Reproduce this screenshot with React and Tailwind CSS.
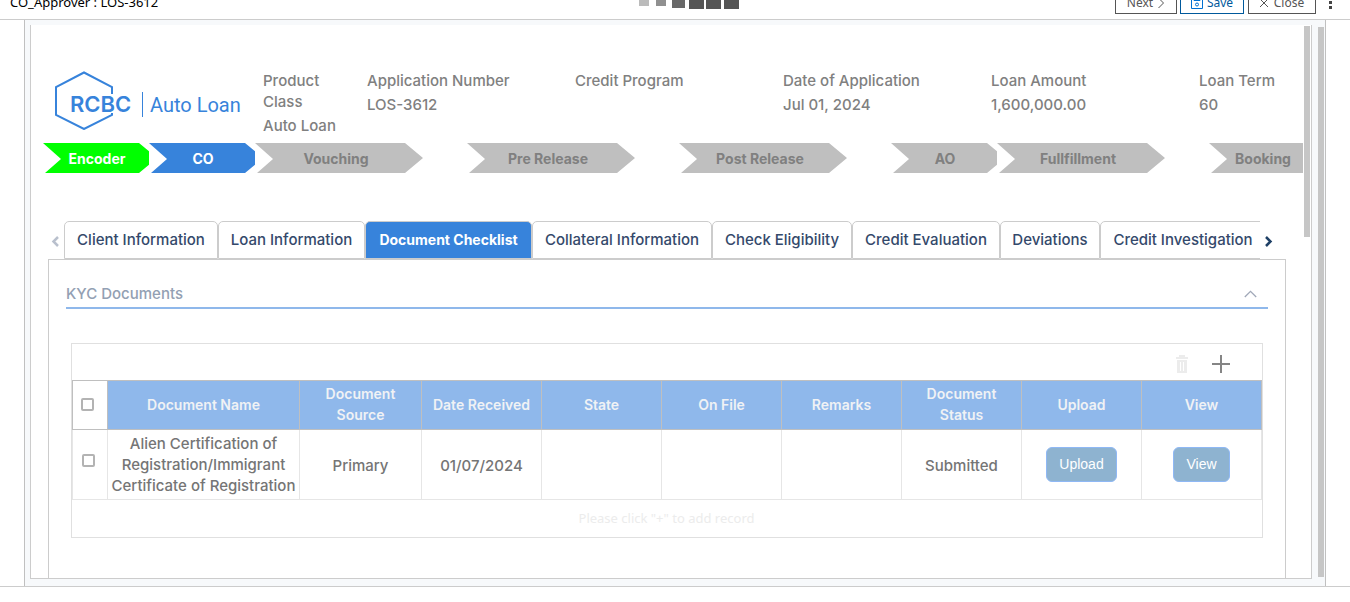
const info = [
  { label: "Product Class", value: "Auto Loan", width: "w-[104px]" },
  { label: "Application Number", value: "LOS-3612", width: "w-[208px]" },
  { label: "Credit Program", value: "", width: "w-[208px]" },
  { label: "Date of Application", value: "Jul 01, 2024", width: "w-[208px]" },
  { label: "Loan Amount", value: "1,600,000.00", width: "w-[208px]" },
  { label: "Loan Term", value: "60", width: "w-[104px]" },
];

const steps = [
  { label: "Encoder", cell: "w-[106px]", tone: "bg-[#00ff00] text-white w-[114px]" },
  { label: "CO", cell: "w-[106px]", tone: "bg-[#3783db] text-white w-[114px]" },
  { label: "Vouching", cell: "w-[212px]", tone: "bg-[#bfbfbf] text-[#808080] w-[168px]" },
  { label: "Pre Release", cell: "w-[212px]", tone: "bg-[#bfbfbf] text-[#808080] w-[168px]" },
  { label: "Post Release", cell: "w-[212px]", tone: "bg-[#bfbfbf] text-[#808080] w-[168px]" },
  { label: "AO", cell: "w-[106px]", tone: "bg-[#bfbfbf] text-[#808080] w-[114px]" },
  { label: "Fullfillment", cell: "w-[212px]", tone: "bg-[#bfbfbf] text-[#808080] w-[168px]" },
  { label: "Booking", cell: "w-[106px]", tone: "bg-[#bfbfbf] text-[#808080] w-[114px]" },
];

const tabs = [
  { label: "Client Information", width: "w-[154px]" },
  { label: "Loan Information", width: "w-[147px]" },
  { label: "Document Checklist", width: "w-[167px]", active: true },
  { label: "Collateral Information", width: "w-[180px]" },
  { label: "Check Eligibility", width: "w-[140px]" },
  { label: "Credit Evaluation", width: "w-[148px]" },
  { label: "Deviations", width: "w-[100px]" },
  { label: "Credit Investigation", width: "w-[166px]" },
];

const columns = ["Document Name", "Document Source", "Date Received", "State", "On File", "Remarks", "Document Status", "Upload", "View"];

function Logo() {
  return (
    <svg width="186" height="60" viewBox="0 0 186 60" role="img" aria-label="RCBC Auto Loan" fill="none">
      <path d="M57 24V17L29 2.500L1 17V45L29 59L57 45V43" stroke="#3783db" strokeWidth="2" />
      <text x="15" y="42" fill="#3783db" className="font-['Inter'] text-[22px] font-semibold">RCBC</text>
      <path d="M87.500 22V47" stroke="#3783db" strokeWidth="1" />
      <text x="95" y="42" fill="#3783db" className="font-['Roboto'] text-[20px]">Auto Loan</text>
    </svg>
  );
}

function TopBar() {
  return (
    <header className="flex h-5 items-end justify-between overflow-hidden border-b border-[#cccccc] px-[10px] font-['Noto_Sans',sans-serif]">
      <h1 className="mb-[7px] flex-1 text-[13px] leading-5 text-black">CO_Approver : LOS-3612</h1>
      <svg width="104" height="20" viewBox="0 0 104 20" className="ml-7 shrink-0" aria-hidden="true">
        <path d="M2 0H12V7H2Z" fill="#bbbbbb" />
        <path d="M19 0H29V7H19Z" fill="#909090" />
        <path d="M35 0H48V9H35Z" fill="#686868" />
        <path d="M52 0H67V10H52ZM69 0H84V10H69ZM87 0H102V10H87Z" fill="#555555" />
      </svg>
      <div className="mb-[5px] flex flex-1 items-end justify-end text-[12px] leading-4">
        <button className="flex h-[23px] w-[62px] items-center justify-center gap-1 border border-[#555] text-[#555]">
          Next
          <svg width="8" height="12" viewBox="0 0 8 12" fill="none" stroke="currentColor"><path d="M1.500 1L6.500 6L1.500 11" /></svg>
        </button>
        <button className="ml-[3px] flex h-[23px] w-16 items-center justify-center gap-1 border border-[#00599c] text-[#00599c]">
          <svg width="12" height="12" viewBox="0 0 12 12" fill="none" stroke="#0070d2"><path d="M.5.5H11.500V11.500H.5ZM3 1V3.500H9V1" /><circle cx="6" cy="7.500" r="1.500" /></svg>
          Save
        </button>
        <button className="ml-1 flex h-[23px] w-[68px] items-center justify-center gap-1.5 border border-[#555] text-[#555]">
          <svg width="8" height="8" viewBox="0 0 8 8" stroke="currentColor"><path d="M0 0L8 8M8 0L0 8" /></svg>
          Close
        </button>
        <button aria-label="More" className="ml-[13px] mr-[7px]">
          <svg width="4" height="18" viewBox="0 0 4 18" fill="#444"><path d="M0 0H3V3H0ZM0 5H3V8H0ZM0 10H3V13H0Z" /></svg>
        </button>
      </div>
    </header>
  );
}

function DocumentTable() {
  return (
    <div className="mx-[5px] mt-[34px] border border-[#e0e0e0]">
      <div className="flex h-9 items-center justify-end gap-6 pr-8 pt-1">
        <button aria-label="Delete" disabled>
          <svg width="12" height="18" viewBox="0 0 12 18" fill="#ececec">
            <path fillRule="evenodd" d="M3 0H9V2H12V4H0V2H3ZM1 5H11V18H1ZM4 7V16H5V7ZM7 7V16H8V7Z" />
          </svg>
        </button>
        <button aria-label="Add">
          <svg width="18" height="18" viewBox="0 0 18 18" fill="#858585"><path d="M8 0H10V18H8ZM0 8H18V10H0Z" /></svg>
        </button>
      </div>
      <table className="w-full table-fixed border-collapse text-center leading-[21px]">
        <colgroup>
          <col className="w-[35px]" />
          <col className="w-[192px]" />
          <col className="w-[122px]" />
          <col /><col /><col /><col /><col /><col /><col />
        </colgroup>
        <thead>
          <tr className="h-[49px] bg-[#8fb8eb] text-[14px] text-[#f0f2f5]">
            <th className="border border-[#bfbfbf] bg-white pb-1 pr-1.5">
              <input type="checkbox" aria-label="Select all" className="size-[13px] appearance-none rounded-[2px] border-2 border-[#b3b3b3] align-middle" />
            </th>
            {columns.map((c) => (
              <th key={c} className="border border-[#bfbfbf] px-2 pb-0.5 font-semibold">{c}</th>
            ))}
          </tr>
        </thead>
        <tbody>
          <tr className="h-[70px] text-[15px] font-medium text-[#757575]">
            <td className="border border-[#e6e6e6] pb-2.5 pr-1">
              <input type="checkbox" aria-label="Select row" className="size-[13px] appearance-none rounded-[2px] border-2 border-[#b3b3b3] align-middle" />
            </td>
            <td className="whitespace-nowrap border border-[#e6e6e6]">
              Alien Certification of<br />Registration/Immigrant<br />Certificate of Registration
            </td>
            <td className="border border-[#e6e6e6] pt-0.5">Primary</td>
            <td className="border border-[#e6e6e6] pt-0.5">01/07/2024</td>
            <td className="border border-[#e6e6e6]" />
            <td className="border border-[#e6e6e6]" />
            <td className="border border-[#e6e6e6]" />
            <td className="border border-[#e6e6e6] pt-0.5">Submitted</td>
            <td className="border border-[#e6e6e6]">
              <button className="h-[35px] rounded-md border border-[#8fb8f5] bg-[#8eb3d0] px-3 font-['Liberation_Sans',sans-serif] text-[14px] font-normal text-white">Upload</button>
            </td>
            <td className="border border-[#e6e6e6]">
              <button className="h-[35px] rounded-md border border-[#8fb8f5] bg-[#8eb3d0] px-3 font-['Liberation_Sans',sans-serif] text-[14px] font-normal text-white">View</button>
            </td>
          </tr>
        </tbody>
      </table>
      <p className="h-[37px] pr-px text-center font-['Noto_Sans',sans-serif] text-[13px] leading-[37px] text-[#ececec]">Please click "+" to add record</p>
    </div>
  );
}

export default function App() {
  return (
    <div className="min-h-screen overflow-hidden bg-white font-['Inter',sans-serif]">
      <TopBar />
      <div className="border-b border-[#cccccc] px-6">
        <div className="flex justify-between border-x border-[#c0c0c0] bg-[#f7f9fb] pb-[7px] pl-[5px] pt-[5px]">
          <main className="flex h-[554px] min-w-0 flex-1 overflow-hidden border-x border-b border-[#cccccc] bg-white">
            <div className="min-w-0 flex-1 overflow-hidden">
              <section className="flex h-[118px] pl-6 pt-[45px]">
                <div className="w-[208px] shrink-0"><Logo /></div>
                <dl className="flex text-[15px] font-medium leading-[21px] text-[#808080]">
                  {info.map((f) => (
                    <div key={f.label} className={"shrink-0 pr-5 " + f.width}>
                      <dt>{f.label}</dt>
                      <dd className="mt-[3px] whitespace-nowrap">{f.value}</dd>
                    </div>
                  ))}
                </dl>
              </section>
              <ol className="flex h-[30px] pl-3 text-[14px] font-bold">
                {steps.map((s) => (
                  <li key={s.label} className={"shrink-0 overflow-hidden " + s.cell}>
                    <div className={"flex h-[30px] items-center justify-center pr-1.5 [clip-path:polygon(0_0,calc(100%-18px)_0,100%_15px,calc(100%-18px)_100%,2px_100%,18px_16px)] " + s.tone}>
                      {s.label}
                    </div>
                  </li>
                ))}
              </ol>
              <div className="mt-12 flex h-[38px] items-center pl-5 pr-7">
                <button aria-label="Previous tabs" disabled className="w-[13px] shrink-0 pt-0.5">
                  <svg width="9" height="11" viewBox="0 0 9 11" fill="none" stroke="#b9c0cd" strokeWidth="2.500"><path d="M7 1L2.500 5.500L7 10" /></svg>
                </button>
                <div role="tablist" className="flex h-[38px] min-w-0 flex-1 overflow-hidden text-[15px] font-medium">
                  {tabs.map((t) => (
                    <button
                      key={t.label}
                      role="tab"
                      aria-selected={!!t.active}
                      className={
                        "shrink-0 whitespace-nowrap rounded-t-[5px] border border-[#cccccc] " +
                        t.width +
                        (t.active ? " bg-[#3783db] pb-0.5 text-[14px] font-bold text-white" : " bg-white text-[#34496b]")
                      }
                    >
                      {t.label}
                    </button>
                  ))}
                </div>
                <button aria-label="Next tabs" className="ml-1 w-[11px] shrink-0 pt-0.5">
                  <svg width="9" height="11" viewBox="0 0 9 11" fill="none" stroke="#1f4066" strokeWidth="2.500"><path d="M2 1L6.500 5.500L2 10" /></svg>
                </button>
              </div>
              <section className="mx-[17px] h-[330px] border border-[#cccccc] px-[17px]">
                <div className="flex h-[49px] items-end justify-between border-b-2 border-[#8fb8eb] pb-[3px] pr-[11px]">
                  <h2 className="text-[15px] font-medium leading-[21px] text-[#93a0b3]">KYC Documents</h2>
                  <button aria-label="Collapse section" className="mb-1.5">
                    <svg width="13" height="8" viewBox="0 0 13 8" fill="none" stroke="#a0a8b8" strokeWidth="1.300"><path d="M.8 7L6.500 1.300L12.200 7" /></svg>
                  </button>
                </div>
                <DocumentTable />
              </section>
            </div>
            <div className="w-2 shrink-0 pl-px pt-px"><div className="h-[211px] w-1.5 bg-[#c6c6c6]" /></div>
          </main>
          <div className="w-[13px] shrink-0 pl-1.5 pt-0.5"><div className="h-[550px] w-1.5 bg-[#c6c6c6]" /></div>
        </div>
      </div>
    </div>
  );
}
